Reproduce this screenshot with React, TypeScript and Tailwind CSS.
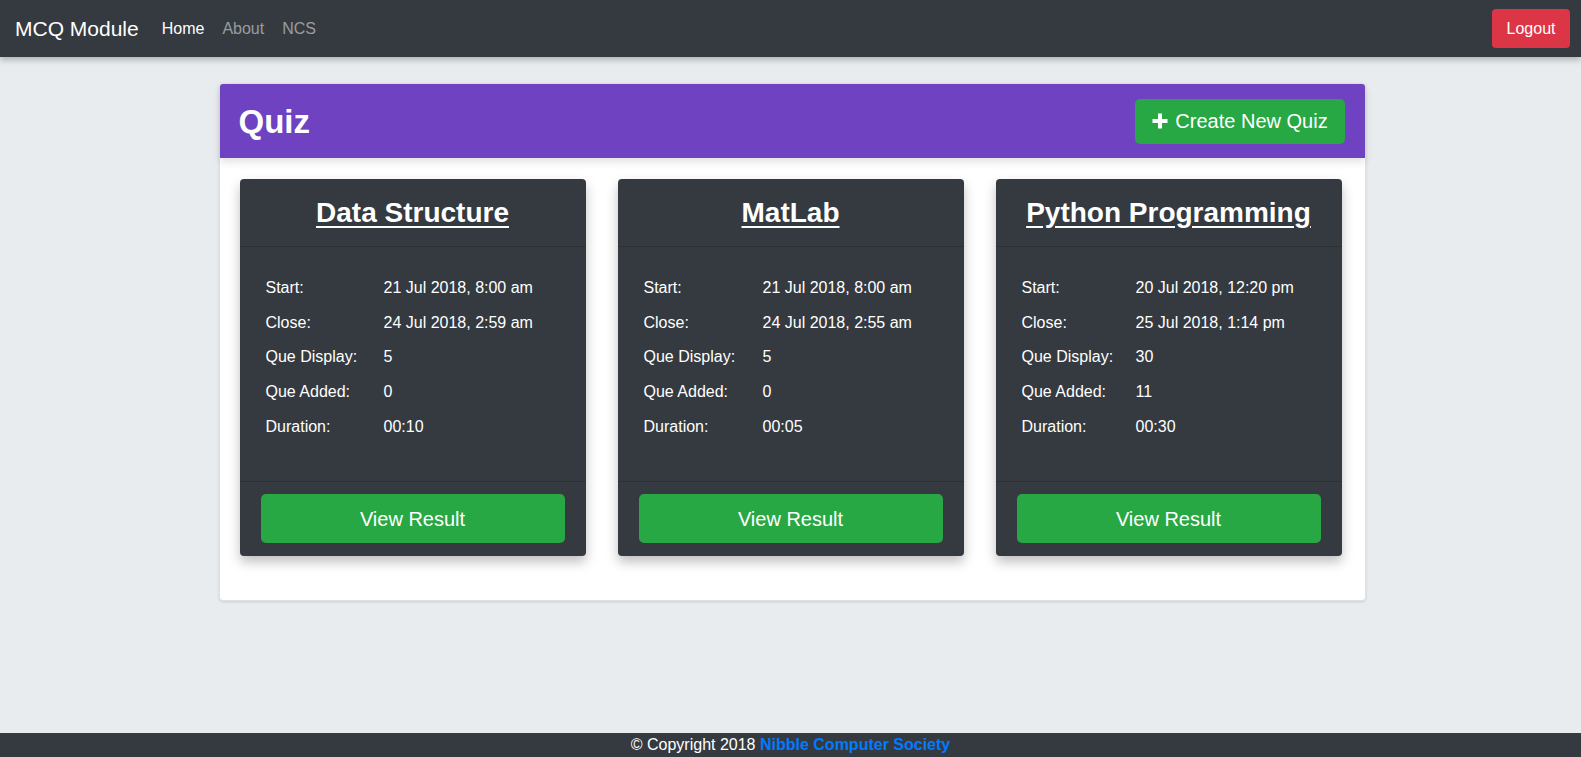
import React from "react";

type Quiz = {
  title: string;
  start: string;
  close: string;
  display: string;
  added: string;
  duration: string;
  labelW: string;
};

const quizzes: Quiz[] = [
  { title: "Data Structure", start: "21 Jul 2018, 8:00 am", close: "24 Jul 2018, 2:59 am", display: "5", added: "0", duration: "00:10", labelW: "w-[118px]" },
  { title: "MatLab", start: "21 Jul 2018, 8:00 am", close: "24 Jul 2018, 2:55 am", display: "5", added: "0", duration: "00:05", labelW: "w-[119px]" },
  { title: "Python Programming", start: "20 Jul 2018, 12:20 pm", close: "25 Jul 2018, 1:14 pm", display: "30", added: "11", duration: "00:30", labelW: "w-[114px]" },
];

function Row({ label, value, labelW }: { label: string; value: string; labelW: string }) {
  return (
    <div className="flex h-[34.6px] items-center">
      <div className={`${labelW} shrink-0`}>{label}</div>
      <div>{value}</div>
    </div>
  );
}

function QuizCard({ q }: { q: Quiz }) {
  return (
    <div className="flex h-[377px] w-[346px] flex-col rounded-[4px] bg-[#343a40] text-white shadow-[0_6px_12px_rgba(0,0,0,0.25)]">
      <div className="flex h-[68px] items-center justify-center border-b border-[#2c3136]">
        <a href="#" className="text-[28px] font-bold leading-none text-white underline underline-offset-[4px]">
          {q.title}
        </a>
      </div>
      <div className="flex-1 border-b border-[#2c3136] pl-[26px] pt-[24px] text-[16px]">
        <Row label="Start:" value={q.start} labelW={q.labelW} />
        <Row label="Close:" value={q.close} labelW={q.labelW} />
        <Row label="Que Display:" value={q.display} labelW={q.labelW} />
        <Row label="Que Added:" value={q.added} labelW={q.labelW} />
        <Row label="Duration:" value={q.duration} labelW={q.labelW} />
      </div>
      <div className="px-[21px] pb-[13px] pt-[12px]">
        <button className="flex h-[49px] w-full items-center justify-center rounded-[5px] bg-[#28a745] text-[20px] text-white">
          View Result
        </button>
      </div>
    </div>
  );
}

export default function App() {
  return (
    <div
      className="flex min-h-screen flex-col bg-[#e9ecef]"
      style={{ fontFamily: '"Liberation Sans", Arial, sans-serif' }}
    >
      <nav className="relative z-10 flex h-[57px] items-center justify-between bg-[#343a40] pl-[15px] pr-[11px] shadow-[0_3px_6px_rgba(0,0,0,0.25)]">
        <div className="flex items-center">
          <span className="text-[21px] text-white">MCQ Module</span>
          <div className="ml-[23px] flex items-center gap-[18px] text-[16px]">
            <a href="#" className="text-white">Home</a>
            <a href="#" className="text-white/50">About</a>
            <a href="#" className="text-white/50">NCS</a>
          </div>
        </div>
        <button className="h-[39px] w-[78px] rounded-[4px] bg-[#dc3545] text-[16px] text-white">Logout</button>
      </nav>

      <main className="flex flex-1 justify-center pl-[3px] pt-[26px]">
        <div className="h-[518px] w-[1147px] rounded-[4px] border border-[#dee2e6] bg-white shadow-sm">
          <div className="flex h-[74px] items-center justify-between rounded-t-[3px] bg-[#6f42c1] pl-[19px] pr-[20px] shadow-[0_4px_8px_rgba(0,0,0,0.12)]">
            <h2 className="text-[33px] font-bold leading-none text-white">Quiz</h2>
            <button className="flex h-[45px] w-[210px] items-center justify-center gap-[6px] rounded-[5px] bg-[#28a745] text-[20px] text-white">
              <svg width="18" height="18" viewBox="0 0 18 18" aria-hidden="true">
                <path d="M9 1.5v15M1.5 9h15" stroke="white" strokeWidth="4" />
              </svg>
              <span>Create New Quiz</span>
            </button>
          </div>
          <div className="flex gap-[32px] px-[20px] pt-[21px]">
            {quizzes.map((q) => (
              <QuizCard key={q.title} q={q} />
            ))}
          </div>
        </div>
      </main>

      <footer className="flex h-[24px] items-center justify-center bg-[#343a40] text-[16px] text-white">
        <span>© Copyright 2018&nbsp;</span>
        <a href="#" className="font-bold text-[#007bff]">Nibble Computer Society</a>
      </footer>
    </div>
  );
}
